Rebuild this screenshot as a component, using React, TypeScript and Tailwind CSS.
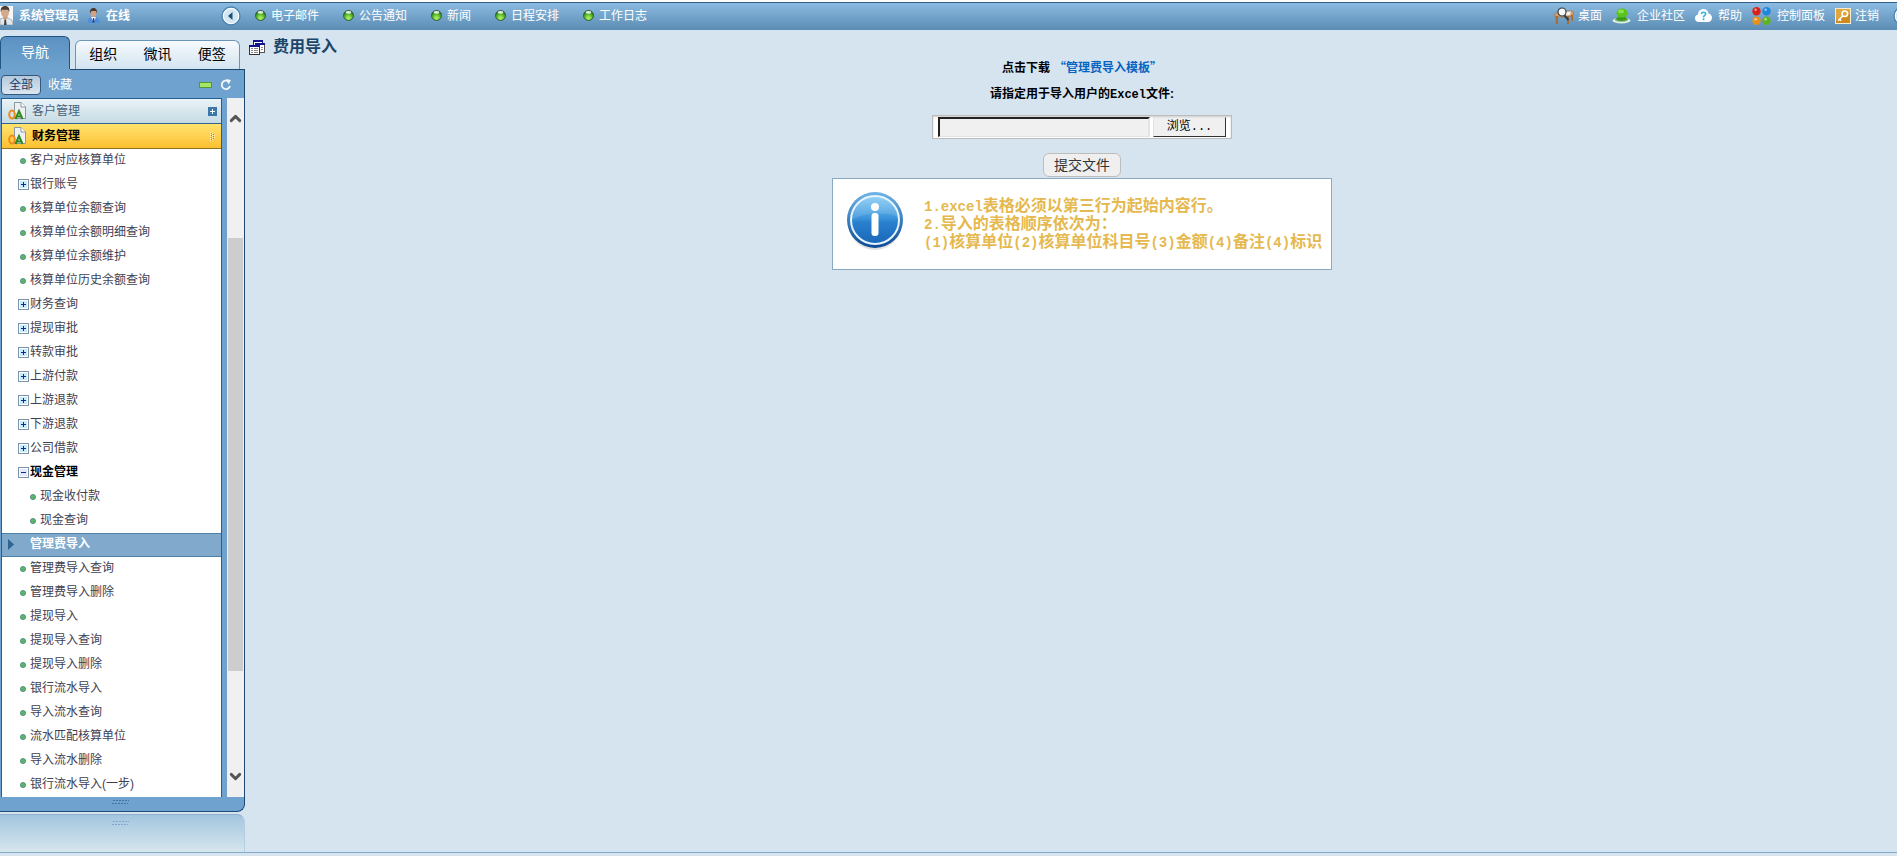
import React, { useRef, useState } from 'react';
import { ChevronDown, ChevronUp } from 'lucide-react';

interface TreeNode {
  label: string;
  kind: 'leaf' | 'plus' | 'minus' | 'child' | 'active';
}

const nodes: TreeNode[] = [
  { label: '客户对应核算单位', kind: 'leaf' },
  { label: '银行账号', kind: 'plus' },
  { label: '核算单位余额查询', kind: 'leaf' },
  { label: '核算单位余额明细查询', kind: 'leaf' },
  { label: '核算单位余额维护', kind: 'leaf' },
  { label: '核算单位历史余额查询', kind: 'leaf' },
  { label: '财务查询', kind: 'plus' },
  { label: '提现审批', kind: 'plus' },
  { label: '转款审批', kind: 'plus' },
  { label: '上游付款', kind: 'plus' },
  { label: '上游退款', kind: 'plus' },
  { label: '下游退款', kind: 'plus' },
  { label: '公司借款', kind: 'plus' },
  { label: '现金管理', kind: 'minus' },
  { label: '现金收付款', kind: 'child' },
  { label: '现金查询', kind: 'child' },
  { label: '管理费导入', kind: 'active' },
  { label: '管理费导入查询', kind: 'leaf' },
  { label: '管理费导入删除', kind: 'leaf' },
  { label: '提现导入', kind: 'leaf' },
  { label: '提现导入查询', kind: 'leaf' },
  { label: '提现导入删除', kind: 'leaf' },
  { label: '银行流水导入', kind: 'leaf' },
  { label: '导入流水查询', kind: 'leaf' },
  { label: '流水匹配核算单位', kind: 'leaf' },
  { label: '导入流水删除', kind: 'leaf' },
  { label: '银行流水导入(一步)', kind: 'leaf' },
];

const shortcuts = ['电子邮件', '公告通知', '新闻', '日程安排', '工作日志'];

const AvatarIcon = () => (
  <svg width="13" height="19" viewBox="0 0 13 19">
    <rect width="13" height="19" fill="#f4f6f8" />
    <path d="M0 13 L3 12 L8 12 L12 14 L13 19 H0 Z" fill="#e3e7ea" stroke="#8b9297" strokeWidth="0.6" />
    <path d="M3 12 L5 14 L7.5 12 V9 H3 Z" fill="#c99a79" />
    <path d="M4.5 13.5 H6 L6.6 19 H4 Z" fill="#3c4047" />
    <ellipse cx="5" cy="6.5" rx="4" ry="5" fill="#d5aa8a" />
    <path d="M0.8 6 C0 1.5 3 0 5 0 C8 0 10 2 9.2 6 L8 3.8 C6 3.5 3.5 3.8 2 3.4 Z" fill="#4a3b33" />
  </svg>
);

const OnlineIcon = () => (
  <svg width="13" height="15" viewBox="0 0 13 15">
    <path d="M0.5 15 C0.5 10.5 3 9 6.5 9 C10 9 12.5 10.5 12.5 15 Z" fill="#4f8ee0" />
    <path d="M4 9 L6.5 14 L9 9 Z" fill="#e8f1fc" />
    <path d="M6 10 H7 L7.6 14.6 H5.4 Z" fill="#26426e" />
    <ellipse cx="6.5" cy="5" rx="3" ry="4" fill="#d0a386" />
    <path d="M3.2 5.5 C2.4 1.5 4.5 0 6.5 0 C8.6 0 10.6 1.5 9.8 5.5 L9 3 H4.4 Z" fill="#503a30" />
  </svg>
);

const GreenDot = () => (
  <svg width="11" height="11" viewBox="0 0 11 11">
    <defs>
      <radialGradient id="dot" cx="0.5" cy="0.75" r="0.6">
        <stop offset="0" stopColor="#b9f56a" />
        <stop offset="0.6" stopColor="#5fbf2b" />
        <stop offset="1" stopColor="#2c7a1a" />
      </radialGradient>
    </defs>
    <circle cx="5.5" cy="5.5" r="5" fill="url(#dot)" stroke="#2d5a3c" strokeWidth="0.9" />
    <ellipse cx="5.5" cy="2.4" rx="2.8" ry="1.4" fill="#dfeedd" />
  </svg>
);

const DesktopIcon = () => (
  <svg width="20" height="18" viewBox="0 0 20 18">
    <path d="M0.5 7 L5 4 H18 L19.5 5 V8 L15 10 H1 Z" fill="#d3a06a" stroke="#a06f3c" strokeWidth="0.6" />
    <path d="M1.5 9 H4 V17 H2 Z M13 9 H15 V17 H13 Z M17 8 H19 V14 H17.4 Z" fill="#a96c34" />
    <path d="M11 5 L17 4.4 L16 8 L12 8.6 Z" fill="#eef1f2" />
    <path d="M10 8 L14.5 13" stroke="#3a3a3a" strokeWidth="2" />
    <circle cx="8" cy="5" r="4" fill="#f4f8fa" stroke="#3b3b3b" strokeWidth="1.2" />
  </svg>
);

const CommunityIcon = () => (
  <svg width="19" height="16" viewBox="0 0 19 16">
    <ellipse cx="9.5" cy="12.5" rx="9" ry="3" fill="#dff0e0" />
    <ellipse cx="9.5" cy="11.6" rx="7" ry="2.2" fill="#7fb78a" />
    <path d="M4 11 C5 9 7 9 7 8.5 L13 8.5 C13 9.5 15.5 10 15 11.5 C12 13.5 6 13.5 4 11 Z" fill="#3d9a14" />
    <ellipse cx="10" cy="5" rx="5.6" ry="4.6" fill="#58c41c" />
    <ellipse cx="9" cy="3.4" rx="3" ry="1.8" fill="#8be04c" />
  </svg>
);

const HelpIcon = () => (
  <svg width="17" height="13" viewBox="0 0 17 13">
    <path d="M4 13 C1.5 13 0 11.5 0 9.3 C0 7.2 1.4 6 3 5.6 C3.2 2.2 5.4 0 8.4 0 C11.3 0 13 1.8 13.5 4.4 C15.6 4.8 17 6.4 17 8.8 C17 11.4 15.4 13 13 13 Z" fill="#fff" />
    <path d="M6.4 5 C6.5 2.7 10.7 2.7 10.6 5 C10.6 6.5 8.5 6.4 8.5 8.4" fill="none" stroke="#35b3e0" strokeWidth="1.6" />
    <rect x="7.6" y="9.4" width="1.8" height="1.8" fill="#35b3e0" />
  </svg>
);

const PanelIcon = () => (
  <svg width="19" height="18" viewBox="0 0 19 18">
    <circle cx="4.5" cy="4.3" r="4.2" fill="#d8211b" />
    <circle cx="14.5" cy="4.3" r="4.2" fill="#1e86dc" />
    <circle cx="4.5" cy="13.7" r="4.2" fill="#e8901c" />
    <circle cx="14.5" cy="13.7" r="4.2" fill="#5fb31f" />
    <circle cx="3.6" cy="2.8" r="1.2" fill="#f29a93" />
    <circle cx="13.6" cy="2.8" r="1.2" fill="#93cdf7" />
    <circle cx="3.6" cy="12.2" r="1.2" fill="#f9d08d" />
    <circle cx="13.6" cy="12.2" r="1.2" fill="#b6e383" />
  </svg>
);

const KeyIcon = () => (
  <svg width="16" height="16" viewBox="0 0 16 16">
    <rect x="0.5" y="0.5" width="15" height="15" fill="#e2a63c" stroke="#f8ecd0" />
    <path d="M1 12 L15 6 V15 H1 Z" fill="#cf8a20" />
    <circle cx="9.8" cy="5.8" r="2.8" fill="none" stroke="#fff" strokeWidth="1.5" />
    <path d="M7.8 8 L3 12.8 M4.6 11.2 L6.2 12.8" stroke="#fff" strokeWidth="1.5" />
  </svg>
);

const ArrowCircle = () => (
  <svg width="20" height="20" viewBox="0 0 20 20">
    <circle cx="10" cy="10" r="9" fill="#e9f3fa" stroke="#4b84b0" strokeWidth="1.4" />
    <circle cx="10" cy="10" r="7.6" fill="#d3e6f3" stroke="#fff" />
    <path d="M11.5 6 V14 L7 10 Z" fill="#1d4f7c" />
  </svg>
);

const OaIcon = () => (
  <svg width="18" height="18" viewBox="0 0 18 18">
    <path d="M6.5 0.5 H13 L17.5 5 V16.5 H6.5 Z" fill="#eef1f3" stroke="#8d979e" />
    <path d="M13 0.5 V5 H17.5" fill="#fff" stroke="#8d979e" />
    <ellipse cx="4" cy="12.6" rx="2.8" ry="4" fill="none" stroke="#ee8a1d" strokeWidth="2" />
    <path d="M7.5 17 L11 9 L14.5 17 M9 14.6 H13" fill="none" stroke="#2f8a1f" strokeWidth="2" />
  </svg>
);

const ToggleIcon = ({ open }: { open: boolean }) => (
  <svg width="11" height="11" viewBox="0 0 11 11" shapeRendering="crispEdges">
    <rect x="0.5" y="0.5" width="10" height="10" fill="#fff" stroke="#7a93a8" />
    <rect x="2" y="2" width="7" height="7" fill={open ? '#e3e8fa' : '#c9eafa'} />
    <rect x="3" y="5" width="5" height="1" fill="#0b2f86" />
    {!open && <rect x="5" y="3" width="1" height="5" fill="#0b2f86" />}
  </svg>
);

const LeafDot = () => (
  <svg width="6" height="6" viewBox="0 0 6 6">
    <circle cx="3" cy="3" r="2.6" fill="#5cb56a" stroke="#4a8a7c" strokeWidth="0.8" />
  </svg>
);

const GripIcon = ({ color }: { color: string }) => (
  <svg width="17" height="5" viewBox="0 0 17 5" shapeRendering="crispEdges">
    <path d="M1 0.5 H17 M0 3.5 H16" stroke={color} strokeDasharray="2 1" />
  </svg>
);

const WindowsIcon = () => (
  <svg width="16" height="15" viewBox="0 0 16 15" shapeRendering="crispEdges">
    <rect x="4.5" y="0.5" width="9" height="9" fill="#fff" stroke="#14148a" />
    <rect x="4" y="0" width="10" height="2" fill="#14148a" />
    <rect x="6.5" y="3.5" width="9" height="9" fill="#fff" stroke="#555" />
    <rect x="6" y="3" width="10" height="2" fill="#14148a" />
    <rect x="0.5" y="5.5" width="10" height="9" fill="#fff" stroke="#333" />
    <rect x="0" y="5" width="11" height="2" fill="#14148a" />
    <path d="M2 8.5 H4 M5 8.5 H9 M2 10.5 H4 M5 10.5 H9 M2 12.5 H4 M5 12.5 H9 M12 7.5 H14 M12 9.5 H14" stroke="#888" />
  </svg>
);

const InfoIcon = () => (
  <svg width="58" height="60" viewBox="0 0 58 60">
    <defs>
      <linearGradient id="ball" x1="0" y1="0" x2="0" y2="1">
        <stop offset="0" stopColor="#86cdf6" />
        <stop offset="0.45" stopColor="#3d95dc" />
        <stop offset="0.55" stopColor="#2a80ce" />
        <stop offset="1" stopColor="#1a66b8" />
      </linearGradient>
      <linearGradient id="rim" x1="0" y1="0" x2="0" y2="1">
        <stop offset="0" stopColor="#6fb4e6" />
        <stop offset="1" stopColor="#0c4a94" />
      </linearGradient>
    </defs>
    <ellipse cx="29" cy="32" rx="27" ry="27" fill="#000" opacity="0.12" />
    <circle cx="29" cy="29" r="28" fill="url(#rim)" />
    <circle cx="29" cy="29" r="24" fill="url(#ball)" stroke="#e6f4fd" strokeWidth="2" />
    <path d="M6 29 C14 22 42 20 52 26 C50 12 40 6 29 6 C17 6 6 15 6 29 Z" fill="#fff" opacity="0.12" />
    <circle cx="29" cy="16" r="4" fill="#fff" />
    <rect x="25.5" y="22" width="7" height="23" rx="3" fill="#fff" />
  </svg>
);

const links = [
  { label: '桌面', icon: <DesktopIcon />, style: 'gap-1' },
  { label: '企业社区', icon: <CommunityIcon />, style: 'gap-1.5' },
  { label: '帮助', icon: <HelpIcon />, style: 'gap-1.5' },
  { label: '控制面板', icon: <PanelIcon />, style: 'gap-1.5' },
  { label: '注销', icon: <KeyIcon />, style: 'gap-1' },
];

const Header = () => (
  <header className="flex h-7 items-center overflow-hidden border-t border-[#2f6089] bg-linear-to-b from-[#8bbbe1] to-[#5b8cb3] pb-0.5 text-white">
    <div className="flex w-[255px] shrink-0 items-center">
      <AvatarIcon />
      <span className="ml-1.5 font-bold">系统管理员</span>
      <span className="ml-2 flex items-center gap-1.5 font-bold">
        <OnlineIcon />
        在线
      </span>
      <button aria-label="收起" className="mr-[14px] ml-auto">
        <ArrowCircle />
      </button>
    </div>
    <nav className="flex items-center gap-6">
      {shortcuts.map((s) => (
        <a key={s} href="#" className="flex items-center gap-[5px]">
          <GreenDot />
          {s}
        </a>
      ))}
    </nav>
    <nav className="-mr-4 ml-auto flex shrink-0 items-center gap-[10px]">
      {links.map((l) => (
        <a key={l.label} href="#" className={`flex items-center ${l.style}`}>
          {l.icon}
          {l.label}
        </a>
      ))}
      <button aria-label="更多" className="ml-1">
        <ArrowCircle />
      </button>
    </nav>
  </header>
);

const TreeRow = ({ node }: { node: TreeNode }) => {
  if (node.kind === 'active') {
    return (
      <li className="h-6 border-y border-[#4f7fa6] bg-[#80a9cb]">
        <a href="#" className="flex h-full items-center pb-0.5 pl-1.5 font-bold text-white">
          <svg width="6" height="11" viewBox="0 0 6 11" className="mr-4">
            <path d="M0 0 L6 5.5 L0 11 Z" fill="#2f6391" />
          </svg>
          {node.label}
        </a>
      </li>
    );
  }
  const isToggle = node.kind === 'plus' || node.kind === 'minus';
  return (
    <li className="h-6">
      <a
        href="#"
        className={`flex h-full items-center pb-0.5 ${node.kind === 'child' ? 'pl-6' : 'pl-[14px]'} ${
          node.kind === 'minus' ? 'font-bold text-black' : 'text-[#3f4150]'
        }`}
      >
        <span className="flex w-[14px] shrink-0 justify-center pt-px">
          {isToggle ? <ToggleIcon open={node.kind === 'minus'} /> : <LeafDot />}
        </span>
        {node.label}
      </a>
    </li>
  );
};

const Sidebar = () => (
  <aside className="flex w-[245px] shrink-0 flex-col pt-1.5">
    <div className="flex items-end">
      <button className="-mb-px h-[34px] w-[70px] rounded-t-md border border-b-0 border-[#1d5584] bg-linear-to-b from-[#5c92c3] to-[#6fa3cf] pb-1 text-sm text-white">
        导航
      </button>
      <div className="ml-[5px] grid h-[29px] w-[165px] grid-cols-3 rounded-t-md border border-b-0 border-[#6b95b8] bg-linear-to-b from-[#f6fafd] to-[#d3e4f0] pb-0.5 text-sm text-black">
        <button>组织</button>
        <button>微讯</button>
        <button>便签</button>
      </div>
    </div>
    <div className="rounded-br-lg border-r border-b border-[#1d4a75] bg-[#6fa2ce]">
      <div className="ml-[70px] h-px bg-[#1d4a75]" />
      <div className="flex h-[28px] items-center pt-0.5 pl-px">
        <button className="h-5 w-10 rounded-sm border border-[#33597c] bg-linear-to-b from-[#b5c9dc] to-[#dbe6f0] text-[#123c66]">
          全部
        </button>
        <button className="ml-[7px] text-white">收藏</button>
        <span className="ml-auto h-1.5 w-[13px] border border-[#4d9a34] bg-[#a5e465]" />
        <button aria-label="刷新" className="mr-3 ml-2">
          <svg width="12" height="12" viewBox="0 0 12 12">
            <path d="M8.5 2.5 A4.2 4.2 0 1 0 10 7" fill="none" stroke="#f2f7fb" strokeWidth="1.8" />
            <path d="M6 0 L11 1 L8.6 5.4 Z" fill="#f2f7fb" />
          </svg>
        </button>
      </div>
      <div className="flex">
        <div className="ml-px flex-1 border-x border-t border-[#22608f] bg-white">
          <button className="flex h-[25px] w-full items-center border-b border-[#2d6490] bg-linear-to-b from-[#eaf3f7] to-[#c6dbe4] pr-1 pl-1.5 text-[#47617c]">
            <OaIcon />
            <span className="ml-1.5">客户管理</span>
            <svg width="9" height="9" viewBox="0 0 9 9" className="ml-auto" shapeRendering="crispEdges">
              <rect width="9" height="9" fill="#3d76a8" />
              <path d="M2 4.5 H7 M4.5 2 V7" stroke="#fff" />
            </svg>
          </button>
          <button className="flex h-[25px] w-full items-center border-b border-[#8f7421] bg-linear-to-b from-[#ffe36c] to-[#fcc02f] pr-[5px] pl-1.5 font-bold text-black">
            <OaIcon />
            <span className="ml-1.5">财务管理</span>
            <svg width="6" height="9" viewBox="0 0 6 9" className="ml-auto" shapeRendering="crispEdges">
              <path d="M0.5 0 V9 M2.5 1 V8 M4.5 3 V6" stroke="#fff6c8" strokeDasharray="1 1" />
              <path d="M1.5 1 V8 M3.5 2 V7" stroke="#b98b1c" strokeDasharray="1 1" />
            </svg>
          </button>
          <ul>
            {nodes.map((n) => (
              <TreeRow key={n.label} node={n} />
            ))}
          </ul>
        </div>
        <div className="ml-[5px] flex w-[17px] flex-col items-center bg-[#f0f0f0] text-[#555]">
          <div className="flex h-[20%] items-start pt-3">
            <ChevronUp size={17} strokeWidth={4} />
          </div>
          <div className="h-[62%] w-[15px] bg-[#cdcdcd]" />
          <div className="flex flex-1 items-end pb-3">
            <ChevronDown size={17} strokeWidth={4} />
          </div>
        </div>
      </div>
      <div className="flex h-[14px] items-center justify-center pr-1 pb-1">
        <GripIcon color="#3e75a5" />
      </div>
    </div>
    <div className="mt-0.5 flex flex-1 justify-center rounded-tr-lg border-t border-r border-t-[#8fb1cc] border-r-[#b4cee1] bg-linear-to-b from-[#a3c5df] to-[#d6e6ee] pt-1.5 pr-1">
      <GripIcon color="#7fa8c9" />
    </div>
  </aside>
);

// Latin runs are about half as wide as the Chinese characters
const Half = ({ children }: { children: React.ReactNode }) => (
  <span className="font-['Liberation_Mono',monospace] text-sm leading-none">{children}</span>
);

const ImportForm = () => {
  const fileRef = useRef<HTMLInputElement>(null);
  const [fileName, setFileName] = useState('');

  return (
    <form className="ml-[22px] flex flex-col items-center text-black" onSubmit={(e) => e.preventDefault()}>
      <p className="font-['Noto_Sans_CJK_SC',sans-serif] leading-[18px] font-bold">
        点击下载
        <a href="#" className="ml-1 text-[#0563c1]">
          “管理费导入模板”
        </a>
      </p>
      <label htmlFor="fileName" className="mt-[9px] leading-[18px] font-bold">
        请指定用于导入用户的<span className="font-['Liberation_Mono',monospace] leading-none">Excel</span>文件:
      </label>
      <div className="mt-3 flex h-6 w-[300px] items-center gap-[3px] border border-[#bcbcbc] bg-white px-[5px] shadow-[inset_0_1px_2px_#ccc]">
        <input
          id="fileName"
          type="text"
          readOnly
          value={fileName}
          className="h-5 min-w-0 flex-1 border-t-2 border-r-2 border-b border-l-2 border-[#222] border-r-[#e3e3e3] border-b-[#e3e3e3] bg-[#f0f0f0]"
        />
        <button
          type="button"
          onClick={() => fileRef.current?.click()}
          className="h-5 w-[73px] border border-[#e3e3e3] border-r-[#333] border-b-[#333] bg-[#f0f0f0] font-['Liberation_Mono','Noto_Sans_CJK_SC',monospace]"
        >
          浏览...
        </button>
        <input
          ref={fileRef}
          type="file"
          aria-label="选择文件"
          className="hidden"
          onChange={(e) => setFileName(e.target.files?.[0]?.name ?? '')}
        />
      </div>
      <button type="submit" className="mt-[14px] h-6 w-[78px] rounded-md border border-[#bdbdbd] bg-[#efefef] text-sm text-[#333]">
        提交文件
      </button>
      <div className="mt-px flex h-[92px] w-[500px] border border-[#8aa9c2] bg-white pt-3 pl-[13px]">
        <InfoIcon />
        <div className="mt-1.5 ml-5 text-base leading-[18px] font-bold whitespace-nowrap text-[#e5b94f]">
          <p>
            <Half>1.excel</Half>表格必须以第三行为起始内容行。
          </p>
          <p>
            <Half>2.</Half>导入的表格顺序依次为：
          </p>
          <p>
            <Half>(1)</Half>核算单位<Half>(2)</Half>核算单位科目号<Half>(3)</Half>金额<Half>(4)</Half>备注
            <Half>(4)</Half>标识
          </p>
        </div>
      </div>
    </form>
  );
};

export default function App() {
  return (
    <div className="flex min-h-screen flex-col bg-[#d6e4ef] font-['Liberation_Sans','Noto_Sans_CJK_SC',sans-serif] text-xs">
      <div className="h-0.5 bg-white" />
      <Header />
      <div className="flex flex-1">
        <Sidebar />
        <main className="min-w-0 flex-1">
          <h1 className="flex h-7 items-center gap-2 pt-1.5 pl-1 text-base leading-4 font-bold text-[#1c4669]">
            <WindowsIcon />
            费用导入
          </h1>
          <ImportForm />
        </main>
      </div>
      <footer className="h-1 border-t border-[#86abc9] bg-[#d6e4ef]" />
    </div>
  );
}
